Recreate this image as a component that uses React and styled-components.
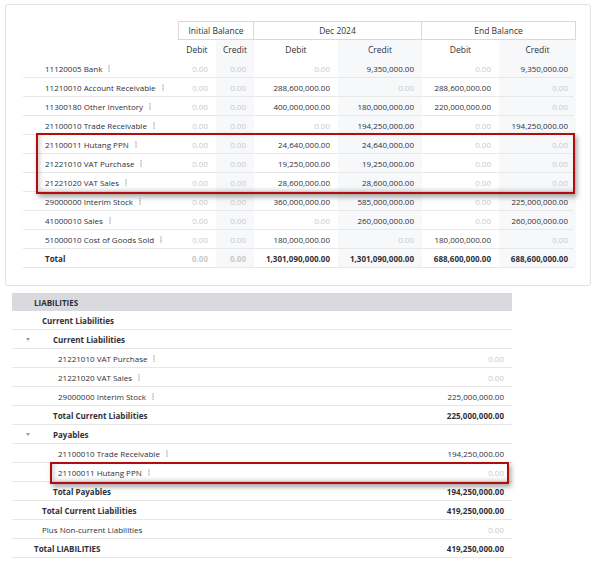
import React from 'react';
import styled, { createGlobalStyle, css } from 'styled-components';

const GlobalStyle = createGlobalStyle`
  body {
    margin: 0;
    background: #fff;
    font-family: "Open Sans", "Noto Sans", sans-serif;
    color: #333;
  }
`;

const Page = styled.div`
  width: 598px;
  height: 566px;
  overflow: hidden;
  padding-top: 4px;
  box-sizing: border-box;
`;

const Card = styled.div`
  margin: 0 7px 0 5px;
  padding: 16px 16px 17px 17px;
  border: 1px solid #e2e2e2;
  border-radius: 3px;
  box-sizing: border-box;
  height: 282px;
`;

const COLS = '155px 38px 38px 84px 84px 77px 77px';

const GroupRow = styled.div`
  display: grid;
  grid-template-columns: 155px 76px 168px 154px;
  height: 19px;
`;

const GroupCell = styled.div`
  border: 1px solid #d9d9d9;
  border-left: ${(p) => (p.first ? '1px solid #d9d9d9' : 'none')};
  display: flex;
  align-items: center;
  justify-content: center;
  font-size: 8.5px;
  color: #333;
`;

const Row = styled.div`
  display: grid;
  grid-template-columns: ${COLS};
  height: 19px;
  box-sizing: border-box;
  border-bottom: ${(p) => (p.noLine ? 'none' : '1px solid #e8e8e8')};
  font-weight: ${(p) => (p.bold ? 700 : 400)};
`;

const Cell = styled.div`
  display: flex;
  align-items: center;
  justify-content: flex-end;
  padding-right: 8px;
  font-size: 8px;
  white-space: nowrap;
  background: ${(p) => (p.shade ? '#f7f8fa' : 'transparent')};
  color: ${(p) => (p.zero ? '#c9c9cc' : '#2f2f3a')};
  ${(p) =>
    p.head &&
    css`
      justify-content: center;
      padding-right: 0;
      font-size: 8.5px;
      color: #2f2f3a;
    `}
`;

const Label = styled.div`
  display: flex;
  align-items: center;
  padding-left: ${(p) => p.indent || 22}px;
  font-size: 8px;
  white-space: nowrap;
  color: #2f2f3a;
`;

const Grip = styled.span`
  display: inline-block;
  width: 2px;
  height: 7px;
  margin-left: 6px;
  background: repeating-linear-gradient(#d2d2d2 0 1px, #e6e6e6 1px 2px);
`;

const Highlight = styled.div`
  position: relative;
  &::after {
    content: '';
    position: absolute;
    top: ${(p) => p.box[0]}px;
    right: ${(p) => p.box[1]}px;
    bottom: ${(p) => p.box[2]}px;
    left: ${(p) => p.box[3]}px;
    border: 2px solid #b20d0d;
    box-shadow: 2px 3px 5px rgba(0, 0, 0, 0.35), inset 2px -2px 4px rgba(0, 0, 0, 0.18);
    pointer-events: none;
  }
`;

const Panel = styled.div`
  margin: 7px 0 0 12px;
  width: 500px;
`;

const PanelHead = styled.div`
  height: 18px;
  background: #d9dadd;
  display: flex;
  align-items: center;
  padding-left: 22px;
  font-size: 8px;
  font-weight: 700;
  color: #2f2f3a;
`;

const PRow = styled.div`
  display: flex;
  align-items: center;
  height: 19px;
  box-sizing: border-box;
  border-bottom: 1px solid #e6e6e6;
  font-size: 8px;
  font-weight: ${(p) => (p.bold ? 700 : 400)};
  color: #2f2f3a;
  position: relative;
`;

const PLabel = styled.div`
  flex: 1;
  display: flex;
  align-items: center;
  padding-left: ${(p) => p.indent}px;
  white-space: nowrap;
`;

const PValue = styled.div`
  padding-right: 8px;
  color: ${(p) => (p.zero ? '#c9c9cc' : '#2f2f3a')};
`;

const Caret = styled.span`
  position: absolute;
  left: 14px;
  top: 8px;
  width: 0;
  height: 0;
  border-left: 2.5px solid transparent;
  border-right: 2.5px solid transparent;
  border-top: 3px solid #9a9a9a;
`;

const rows = [
  ['11120005 Bank', '0.00', '0.00', '0.00', '9,350,000.00', '0.00', '9,350,000.00'],
  ['11210010 Account Receivable', '0.00', '0.00', '288,600,000.00', '0.00', '288,600,000.00', '0.00'],
  ['11300180 Other Inventory', '0.00', '0.00', '400,000,000.00', '180,000,000.00', '220,000,000.00', '0.00'],
  ['21100010 Trade Receivable', '0.00', '0.00', '0.00', '194,250,000.00', '0.00', '194,250,000.00'],
  ['21100011 Hutang PPN', '0.00', '0.00', '24,640,000.00', '24,640,000.00', '0.00', '0.00'],
  ['21221010 VAT Purchase', '0.00', '0.00', '19,250,000.00', '19,250,000.00', '0.00', '0.00'],
  ['21221020 VAT Sales', '0.00', '0.00', '28,600,000.00', '28,600,000.00', '0.00', '0.00'],
  ['29000000 Interim Stock', '0.00', '0.00', '360,000,000.00', '585,000,000.00', '0.00', '225,000,000.00'],
  ['41000010 Sales', '0.00', '0.00', '0.00', '260,000,000.00', '0.00', '260,000,000.00'],
  ['51000010 Cost of Goods Sold', '0.00', '0.00', '180,000,000.00', '0.00', '180,000,000.00', '0.00'],
];

const TrialRow = ({ data, bold, grip = true }) => (
  <Row bold={bold}>
    <Label>
      {data[0]}
      {grip && <Grip />}
    </Label>
    {data.slice(1).map((v, i) => (
      <Cell key={i} shade={i % 2 === 1} zero={v === '0.00'}>
        {v}
      </Cell>
    ))}
  </Row>
);

const liabilities = [
  { label: 'Current Liabilities', indent: 30, bold: true },
  { label: 'Current Liabilities', indent: 41, bold: true, caret: true },
  { label: '21221010 VAT Purchase', indent: 46, value: '0.00', grip: true },
  { label: '21221020 VAT Sales', indent: 46, value: '0.00', grip: true },
  { label: '29000000 Interim Stock', indent: 46, value: '225,000,000.00', grip: true },
  { label: 'Total Current Liabilities', indent: 41, value: '225,000,000.00', bold: true },
  { label: 'Payables', indent: 41, bold: true, caret: true },
  { label: '21100010 Trade Receivable', indent: 46, value: '194,250,000.00', grip: true },
  { label: '21100011 Hutang PPN', indent: 46, value: '0.00', grip: true, mark: true },
  { label: 'Total Payables', indent: 41, value: '194,250,000.00', bold: true },
  { label: 'Total Current Liabilities', indent: 30, value: '419,250,000.00', bold: true },
  { label: 'Plus Non-current Liabilities', indent: 30, value: '0.00' },
  { label: 'Total LIABILITIES', indent: 22, value: '419,250,000.00', bold: true },
];

const LiabRow = ({ r }) => (
  <PRow bold={r.bold}>
    {r.caret && <Caret />}
    <PLabel indent={r.indent}>
      {r.label}
      {r.grip && <Grip />}
    </PLabel>
    {r.value && <PValue zero={r.value === '0.00'}>{r.value}</PValue>}
  </PRow>
);

export default function App() {
  return (
    <Page>
      <GlobalStyle />
      <Card>
        <GroupRow>
          <div />
          <GroupCell first>Initial Balance</GroupCell>
          <GroupCell>Dec 2024</GroupCell>
          <GroupCell>End Balance</GroupCell>
        </GroupRow>
        <Row noLine>
          <div />
          {['Debit', 'Credit', 'Debit', 'Credit', 'Debit', 'Credit'].map((h, i) => (
            <Cell key={i} head shade={i % 2 === 1}>
              {h}
            </Cell>
          ))}
        </Row>
        {rows.slice(0, 4).map((r) => (
          <TrialRow key={r[0]} data={r} />
        ))}
        <Highlight box={[-2, -1, -2, 13]}>
          {rows.slice(4, 7).map((r) => (
            <TrialRow key={r[0]} data={r} />
          ))}
        </Highlight>
        {rows.slice(7).map((r) => (
          <TrialRow key={r[0]} data={r} />
        ))}
        <TrialRow
          bold
          grip={false}
          data={['Total', '0.00', '0.00', '1,301,090,000.00', '1,301,090,000.00', '688,600,000.00', '688,600,000.00']}
        />
      </Card>
      <Panel>
        <PanelHead>LIABILITIES</PanelHead>
        {liabilities.map((r, i) =>
          r.mark ? (
            <Highlight key={i} box={[-1, 3, -2, 38]}>
              <LiabRow r={r} />
            </Highlight>
          ) : (
            <LiabRow key={i} r={r} />
          )
        )}
      </Panel>
    </Page>
  );
}
